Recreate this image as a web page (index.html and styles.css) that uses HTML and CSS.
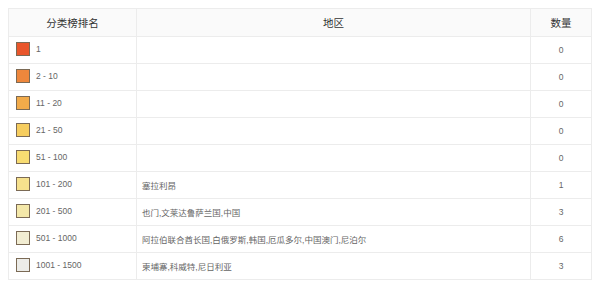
FILE: index.html
```html
<!DOCTYPE html>
<html lang="zh">
<head>
<meta charset="utf-8">
<link rel="stylesheet" href="styles.css">
</head>
<body>
<table class="rank-table">
  <thead>
    <tr><th class="c-rank">分类榜排名</th><th class="c-region">地区</th><th class="c-count">数量</th></tr>
  </thead>
  <tbody>
    <tr><td class="c-rank"><span class="sw s1"></span>1</td><td class="c-region"></td><td class="c-count">0</td></tr>
    <tr><td class="c-rank"><span class="sw s2"></span>2 - 10</td><td class="c-region"></td><td class="c-count">0</td></tr>
    <tr><td class="c-rank"><span class="sw s3"></span>11 - 20</td><td class="c-region"></td><td class="c-count">0</td></tr>
    <tr><td class="c-rank"><span class="sw s4"></span>21 - 50</td><td class="c-region"></td><td class="c-count">0</td></tr>
    <tr><td class="c-rank"><span class="sw s5"></span>51 - 100</td><td class="c-region"></td><td class="c-count">0</td></tr>
    <tr><td class="c-rank"><span class="sw s6"></span>101 - 200</td><td class="c-region">塞拉利昂</td><td class="c-count">1</td></tr>
    <tr><td class="c-rank"><span class="sw s7"></span>201 - 500</td><td class="c-region">也门,文莱达鲁萨兰国,中国</td><td class="c-count">3</td></tr>
    <tr><td class="c-rank"><span class="sw s8"></span>501 - 1000</td><td class="c-region">阿拉伯联合酋长国,白俄罗斯,韩国,厄瓜多尔,中国澳门,尼泊尔</td><td class="c-count">6</td></tr>
    <tr><td class="c-rank"><span class="sw s9"></span>1001 - 1500</td><td class="c-region">柬埔寨,科威特,尼日利亚</td><td class="c-count">3</td></tr>
  </tbody>
</table>
</body>
</html>
```
FILE: styles.css
```css
html, body { margin: 0; padding: 0; background: #fff; }
body { padding: 8px; font-family: "Liberation Sans", "Noto Sans CJK SC", sans-serif; }
.rank-table {
  border-collapse: collapse;
  width: 584px;
  table-layout: fixed;
}
.rank-table th, .rank-table td {
  border: 1px solid #ececec;
  padding: 0;
}
.rank-table th {
  height: 27px;
  background: #fafafa;
  color: #333;
  font-weight: normal;
  font-size: 10.5px;
  text-align: center;
}
.rank-table td {
  height: 26px;
  color: #666;
  font-size: 8.5px;
}
.c-rank { width: 127px; }
.c-count { width: 60px; text-align: center; }
td.c-rank { padding-left: 7px; white-space: nowrap; }
td.c-region { padding-left: 5px; }
.sw {
  display: inline-block;
  width: 12px;
  height: 12px;
  border: 1px solid #7b6a55;
  vertical-align: middle;
  margin-right: 6px;
  position: relative;
  top: -1px;
}
.s1 { background: #e9562b; }
.s2 { background: #ee873c; }
.s3 { background: #f2ab4a; }
.s4 { background: #f6cd5e; }
.s5 { background: #f8dc72; }
.s6 { background: #f6e18d; }
.s7 { background: #f4e8a9; }
.s8 { background: #f2edd2; }
.s9 { background: #ecece8; }
```
